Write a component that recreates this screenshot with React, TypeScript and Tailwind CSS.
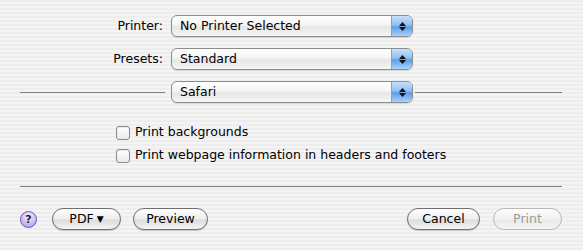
import React from "react";

const font = "font-['DejaVu_Sans','Liberation_Sans',sans-serif]";

function Popup({ label }: { label: string }) {
  return (
    <div className="relative w-[242px] h-[22px] rounded-[6px] border border-[#8c8c8c] bg-[linear-gradient(#ffffff,#f4f4f4_45%,#e6e6e6_55%,#f6f6f6)] shadow-[0_1px_1px_rgba(0,0,0,0.12)] flex items-center overflow-hidden">
      <span className="pl-[8px] text-[12.5px] text-black leading-none">{label}</span>
      <div className="absolute right-0 top-0 bottom-0 w-[21px] border-l border-[#7fa2d0] bg-[linear-gradient(#c9e1fb,#8fbff3_45%,#5d9ceb_55%,#a9d3fb)] flex flex-col items-center justify-center gap-[1px]">
        <svg width="7" height="4" viewBox="0 0 7 4"><path d="M3.5 0L7 4H0z" fill="#111" /></svg>
        <svg width="7" height="4" viewBox="0 0 7 4"><path d="M0 0H7L3.5 4z" fill="#111" /></svg>
      </div>
    </div>
  );
}

function Checkbox({ label }: { label: string }) {
  return (
    <div className="flex items-center h-[23px]">
      <div className="w-[14px] h-[14px] rounded-[3px] border border-[#8a8a8a] bg-[linear-gradient(#ffffff,#e9e9e9)] shadow-[inset_0_1px_1px_rgba(0,0,0,0.08)]" />
      <span className="ml-[5px] text-[12.5px] text-black">{label}</span>
    </div>
  );
}

function Button({ children, w, disabled }: { children: React.ReactNode; w: string; disabled?: boolean }) {
  return (
    <div
      className={`${w} h-[22px] rounded-full border flex items-center justify-center text-[12.5px] leading-none ${
        disabled
          ? "border-[#b8b8b8] text-[#9a9a9a] bg-[linear-gradient(#fdfdfd,#f1f1f1_50%,#e9e9e9_55%,#f6f6f6)]"
          : "border-[#6f6f6f] text-black bg-[linear-gradient(#ffffff,#eeeeee_48%,#dcdcdc_55%,#f4f4f4)] shadow-[0_1px_1px_rgba(0,0,0,0.2)]"
      }`}
    >
      {children}
    </div>
  );
}

export default function App() {
  return (
    <div className={`w-[583px] h-[250px] ${font} bg-[repeating-linear-gradient(#ededed_0px,#ededed_2px,#f4f4f4_2px,#f4f4f4_4px)] flex flex-col`}>
      {/* Printer / Presets */}
      <div className="pt-[15px] flex flex-col gap-[11px]">
        <div className="flex items-center">
          <span className="w-[163px] text-right text-[12.5px] text-black">Printer:</span>
          <div className="ml-[8px]"><Popup label="No Printer Selected" /></div>
        </div>
        <div className="flex items-center">
          <span className="w-[163px] text-right text-[12.5px] text-black">Presets:</span>
          <div className="ml-[8px]"><Popup label="Standard" /></div>
        </div>
        <div className="flex items-center pl-[20px]">
          <div className="w-[145px] h-px bg-[#7e7e7e]" />
          <div className="ml-[6px]"><Popup label="Safari" /></div>
          <div className="ml-[2px] w-[147px] h-px bg-[#7e7e7e]" />
        </div>
      </div>

      {/* Options */}
      <div className="mt-[18px] ml-[116px] flex flex-col">
        <Checkbox label="Print backgrounds" />
        <Checkbox label="Print webpage information in headers and footers" />
      </div>

      <div className="mt-[19px] ml-[20px] w-[542px] h-px bg-[#7e7e7e]" />

      {/* Buttons */}
      <div className="mt-[21px] flex items-center pl-[20px]">
        <div className="w-[17px] h-[17px] rounded-full border border-[#6b5aa6] bg-[radial-gradient(circle_at_50%_30%,#f4eeff,#c9b8f5_60%,#a893ea)] flex items-center justify-center text-[11px] font-bold text-[#222] leading-none">?</div>
        <div className="ml-[15px]"><Button w="w-[69px]">PDF <span className="ml-[3px] text-[9px]">▼</span></Button></div>
        <div className="ml-[12px]"><Button w="w-[75px]">Preview</Button></div>
        <div className="ml-[199px]"><Button w="w-[73px]">Cancel</Button></div>
        <div className="ml-[13px]"><Button w="w-[69px]" disabled>Print</Button></div>
      </div>
    </div>
  );
}
